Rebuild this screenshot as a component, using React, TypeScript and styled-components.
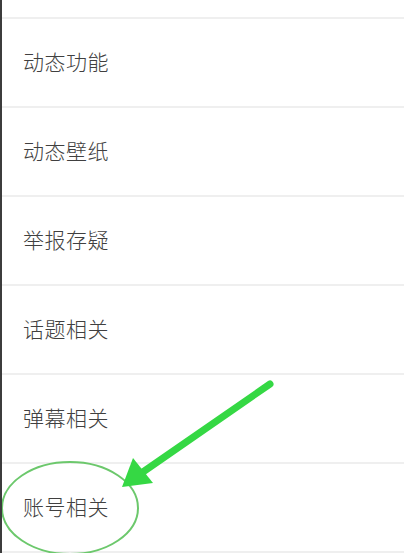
import styled, { createGlobalStyle } from "styled-components"

const GlobalStyle = createGlobalStyle`
  html, body {
    margin: 0;
    padding: 0;
    background: #fff;
  }
  body {
    font-family: "Noto Sans CJK SC", "Noto Sans", sans-serif;
  }
`

const items = ["动态功能", "动态壁纸", "举报存疑", "话题相关", "弹幕相关", "账号相关"]

const App = () => {
  return <Page>
    <GlobalStyle />
    <TopGap />
    <List>
      {items.map(name => <Row key={name}>
        <Label>{name}</Label>
      </Row>)}
    </List>
    <Marks viewBox="0 0 404 553" width="404" height="553">
      <ellipse cx="70" cy="508" rx="68" ry="46" fill="none" stroke="#6cc86c" strokeWidth="2" />
      <line x1="270" y1="384" x2="140" y2="474" stroke="#35d844" strokeWidth="7" strokeLinecap="round" />
      <polygon points="122,487 133,458 153,483" fill="#35d844" />
    </Marks>
  </Page>
}

export default App

const Page = styled.div`
  position: relative;
  width: 404px;
  height: 553px;
  overflow: hidden;
  box-sizing: border-box;
  border-left: 2px solid #3c3c3c;
  background: #fff;
`

const TopGap = styled.div`
  height: 17px;
  border-bottom: 2px solid #efefef;
`

const List = styled.div`
  display: flex;
  flex-direction: column;
`

const Row = styled.div`
  height: 87px;
  box-sizing: border-box;
  display: flex;
  align-items: center;
  padding-left: 21px;
  padding-bottom: 3px;
  border-bottom: 2px solid #efefef;
  height: 89px;
`

const Label = styled.span`
  font-size: 21px;
  line-height: 1;
  font-weight: 300;
  color: #404040;
  letter-spacing: 0.5px;
`

const Marks = styled.svg`
  position: absolute;
  left: -2px;
  top: 0;
  pointer-events: none;
`
